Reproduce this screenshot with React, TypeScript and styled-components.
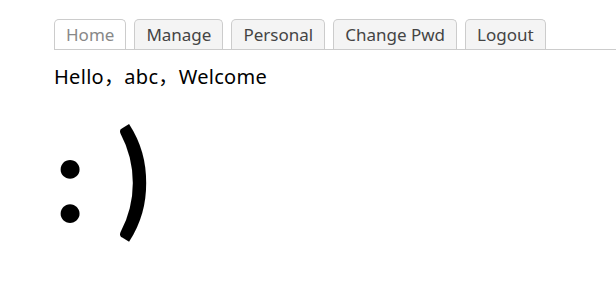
import React from "react";
import styled, { createGlobalStyle } from "styled-components";

const GlobalStyle = createGlobalStyle`
  html, body {
    margin: 0;
    padding: 0;
    background: #ffffff;
    font-family: "Noto Sans", "Open Sans", "Noto Sans CJK SC", sans-serif;
  }
`;

const Page = styled.div`
  padding: 19px 0 0 54px;
`;

const TabBar = styled.ul`
  display: flex;
  gap: 8px;
  margin: 0;
  padding: 0;
  list-style: none;
  border-bottom: 1px solid #cccccc;
`;

const Tab = styled.li<{ active?: boolean }>`
  height: 30px;
  box-sizing: border-box;
  padding: 0 11px;
  display: flex;
  align-items: center;
  background: ${(p) => (p.active ? "#ffffff" : "#f4f4f4")};
  border: 1px solid #cccccc;
  border-bottom: none;
  border-radius: 5px 5px 0 0;
  color: ${(p) => (p.active ? "#888888" : "#444444")};
  font-size: 17px;
  cursor: pointer;
`;

const Greeting = styled.p`
  margin: 14px 0 0;
  font-size: 20px;
  line-height: 26px;
  letter-spacing: 0.3px;
  color: #000000;
`;

const Smile = styled.div`
  margin-top: 9px;
  font-family: "Lato", sans-serif;
  font-weight: 700;
  font-size: 125px;
  line-height: 150px;
  color: #000000;
  white-space: pre;
`;

const tabs = ["Home", "Manage", "Personal", "Change Pwd", "Logout"];

function App() {
  return (
    <Page>
      <GlobalStyle />
      <TabBar>
        {tabs.map((t, i) => (
          <Tab key={t} active={i === 0}>
            {t}
          </Tab>
        ))}
      </TabBar>
      <Greeting>Hello，abc，Welcome</Greeting>
      <Smile>: )</Smile>
    </Page>
  );
}

export default App;
